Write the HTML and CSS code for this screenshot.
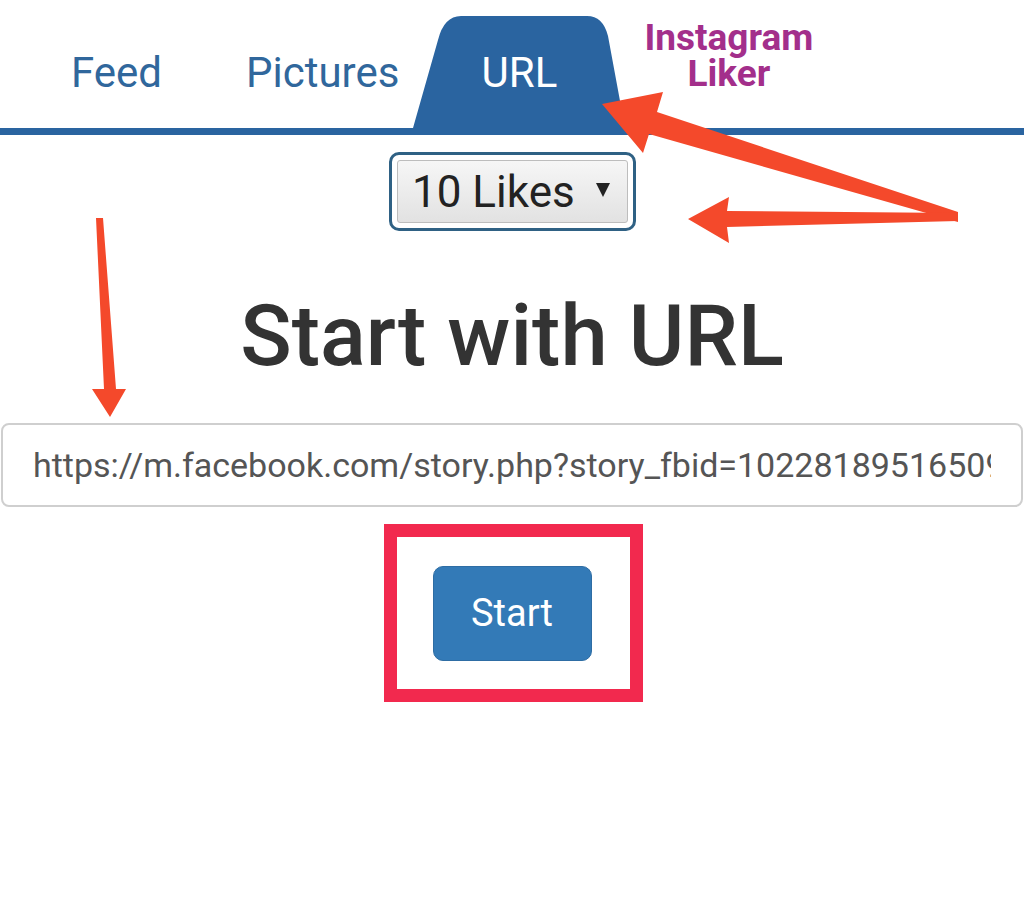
FILE: index.html
```html
<!DOCTYPE html>
<html lang="en">
<head>
  <meta charset="UTF-8">
  <title>Instagram Liker - URL</title>
  <link rel="stylesheet" href="styles.css">
</head>
<body>
  <div class="page">
    <!-- Tab bar -->
    <nav class="tabs">
      <a class="tab tab-feed">Feed</a>
      <a class="tab tab-pictures">Pictures</a>
      <a class="tab tab-url active">
        <svg class="tab-shape" width="212" height="112" viewBox="0 0 212 112">
          <path d="M0 112 L25 24 Q31 0 48 0 L174 0 Q190 0 195 20 L212 112 Z" fill="#2a64a0"/>
        </svg>
        <span class="tab-label">URL</span>
      </a>
      <div class="brand">
        <span class="brand-line">Instagram</span>
        <span class="brand-line">Liker</span>
      </div>
    </nav>

    <div class="likes-row">
      <div class="likes-select">
        <div class="likes-inner">10 Likes <span class="caret"></span></div>
      </div>
    </div>

    <h1 class="title">Start with URL</h1>

    <input class="url-input" type="text" value="https://m.facebook.com/story.php?story_fbid=10228189516509938&amp;id=1453829">

    <div class="highlight">
      <button class="start-btn">Start</button>
    </div>

    <!-- Red annotation arrows -->
    <svg class="arrows" width="1024" height="917" viewBox="0 0 1024 917">
      <polygon points="602,104 663,92 657,112 958,212 958,222 649,134 643,153" fill="#f4492b"/>
      <polygon points="688,219 729,197 727,211 958,213 958,221 727,227 729,243" fill="#f4492b"/>
      <polygon points="96,218 103,218 116,389 126,389 110,417 92,389 104,389" fill="#f4492b"/>
    </svg>
  </div>
</body>
</html>
```

FILE: styles.css
```css
/* Page base */
body {
  margin: 0;
  background: #fff;
  font-family: Roboto, "Liberation Sans", sans-serif;
}

.page {
  position: relative;
  width: 1024px;
  height: 917px;
  overflow: hidden;
}

/* Tab bar */
.tabs {
  display: flex;
  align-items: flex-start;
  height: 128px;
  border-bottom: 7px solid #2a64a0;
}

.tab {
  font-size: 42px;
  line-height: 48px;
  color: #30679c;
  padding-top: 49px;
}

.tab-feed {
  margin-left: 71px;
}

.tab-pictures {
  margin-left: 84px;
}

.tab-url {
  position: relative;
  margin-left: 14px;
  margin-top: 16px;
  width: 212px;
  height: 112px;
  padding-top: 33px;
  box-sizing: border-box;
  text-align: center;
  color: #fff;
}

.tab-shape {
  position: absolute;
  left: 0;
  top: 0;
}

.tab-label {
  position: relative;
}

.brand {
  margin-left: 19px;
  padding-top: 20px;
  font-size: 37px;
  font-weight: bold;
  text-align: center;
  color: #a32f8b;
}

.brand-line {
  display: block;
  height: 36px;
  line-height: 36px;
}

/* Likes dropdown */
.likes-row {
  display: flex;
  justify-content: center;
  margin-top: 17px;
}

.likes-select {
  border: 3px solid #2f6184;
  border-radius: 10px;
  padding: 5px;
  margin-left: 1px;
}

.likes-inner {
  display: flex;
  align-items: center;
  width: 231px;
  height: 63px;
  box-sizing: border-box;
  padding-left: 14px;
  border: 1px solid #bdbdbd;
  border-radius: 3px;
  background: linear-gradient(#f6f6f6, #e2e2e2);
  font-size: 44px;
  color: #222;
}

.caret {
  width: 0;
  height: 0;
  margin-left: 21px;
  margin-bottom: 4px;
  border-left: 7px solid transparent;
  border-right: 7px solid transparent;
  border-top: 14px solid #222;
}

/* Heading */
.title {
  margin: 57px 0 0;
  font-size: 85px;
  line-height: 96px;
  font-weight: 500;
  text-align: center;
  color: #333;
}

/* URL field */
.url-input {
  display: block;
  width: 1022px;
  height: 84px;
  margin: 39px 0 0 1px;
  padding: 0 30px 0 30px;
  box-sizing: border-box;
  border: 2px solid #cfcfcf;
  border-radius: 8px;
  font-family: Roboto, "Liberation Sans", sans-serif;
  font-size: 34px;
  color: #555;
  background: #fff;
  outline: none;
}

/* Start button with red highlight box */
.highlight {
  display: flex;
  align-items: center;
  justify-content: center;
  width: 259px;
  height: 178px;
  box-sizing: border-box;
  margin: 17px auto 0 384px;
  border: 13px solid #f2294e;
}

.start-btn {
  width: 159px;
  height: 95px;
  margin-right: 3px;
  border: 1px solid #2e6da4;
  border-radius: 10px;
  background: #337ab7;
  color: #fff;
  font-family: Roboto, "Liberation Sans", sans-serif;
  font-size: 38px;
}

/* Annotation overlay */
.arrows {
  position: absolute;
  left: 0;
  top: 0;
  pointer-events: none;
}
```
